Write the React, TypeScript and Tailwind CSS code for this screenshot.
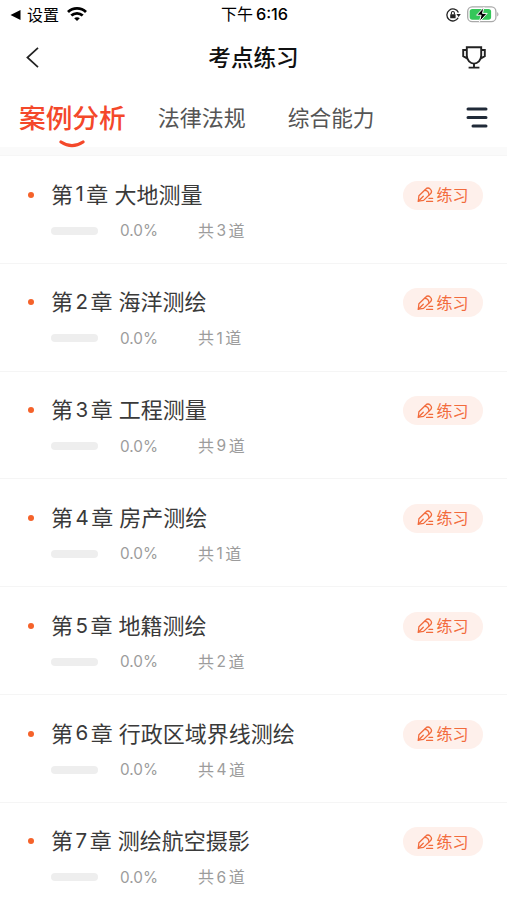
const chapters = [
  { no: 1, name: "大地测量", count: 3 },
  { no: 2, name: "海洋测绘", count: 1 },
  { no: 3, name: "工程测量", count: 9 },
  { no: 4, name: "房产测绘", count: 1 },
  { no: 5, name: "地籍测绘", count: 2 },
  { no: 6, name: "行政区域界线测绘", count: 4 },
  { no: 7, name: "测绘航空摄影", count: 6 },
];

const StatusBar = () => (
  <div className="grid h-[29px] grid-cols-3 items-center pl-[10px] pr-[8px] text-[16px] leading-none text-black">
    <div className="flex items-center">
      <svg width="11" height="10" viewBox="0 0 11 10">
        <path d="M10.5 0v10L0.5 5z" fill="#000" />
      </svg>
      <span className="ml-[6px]">设置</span>
      <svg className="-mt-px ml-[8px]" width="20" height="14" viewBox="0 0 20 14" fill="none" stroke="#000" strokeWidth="2.8">
        <path d="M1 5.1C6 .2 14 .2 19 5.1" />
        <path d="M4.3 8.6c3.3-3.1 8.1-3.1 11.4 0" />
        <path d="M7.2 11.2c1.6-1.4 4-1.4 5.6 0L10 14z" fill="#000" stroke="none" />
      </svg>
    </div>
    <div className="flex items-center justify-center gap-[3px]">
      <span>下午</span>
      <span className="text-[16.3px] font-medium">6:16</span>
    </div>
    <div className="flex items-center justify-end gap-[6px]">
      <svg width="15" height="14" viewBox="0 0 15 14" fill="none" stroke="#222" strokeWidth="1.3">
        <path d="M12.2 9.8A6 6 0 1 1 12.4 4.6" />
        <path d="M10.4 6h4.4l-2.2 3z" fill="#222" stroke="none" />
        <rect x="4.2" y="6.2" width="5.4" height="4" rx=".5" fill="#222" stroke="none" />
        <path d="M5.4 6.4V5a1.5 1.5 0 0 1 3 0v1.4" strokeWidth="1.1" />
      </svg>
      <svg width="32" height="17" viewBox="0 0 32 17">
        <rect x=".7" y=".9" width="28.2" height="14.8" rx="4.5" fill="#fff" stroke="#a9a9a9" strokeWidth="1.3" />
        <rect x="2.7" y="2.9" width="21.4" height="10.8" rx="2.6" fill="#34c759" />
        <path d="M30.2 6c1.7.7 1.7 3.8 0 4.6z" fill="#a9a9a9" />
        <path d="M17 1.2L9.6 9.2h4.5L12.4 15.8l7.8-8.4h-4.7z" fill="#000" stroke="#fff" strokeWidth="1" />
      </svg>
    </div>
  </div>
);

const Header = () => (
  <header className="flex h-[56px] items-center justify-between pl-[26px] pr-[21px]">
    <svg width="13" height="21" viewBox="0 0 13 21" fill="none" stroke="#222" strokeWidth="1.7">
      <path d="M12 .8L1.4 10.5 12 20.2" />
    </svg>
    <h1 className="ml-[6px] mt-[2px] text-[22.6px] font-medium leading-none text-[#111]">考点练习</h1>
    <svg width="24" height="23" viewBox="0 0 24 23" fill="none" stroke="#222" strokeWidth="1.9">
      <path d="M4.8 1.2h14.4v8.4c0 4.8-3.6 8-7.2 8s-7.2-3.2-7.2-8z" />
      <path d="M4.8 4H1.2v6.2l3.9 2.2M19.2 4h3.6v6.2l-3.9 2.2" />
      <path d="M12 17.6V21.6M6.6 21.6h10.8" />
    </svg>
  </header>
);

const Tabs = () => (
  <nav className="flex h-[62px] items-start px-[19px] pt-[18px] text-[22px] leading-[30px] text-[#555]">
    <div className="flex flex-col items-center">
      <span className="text-[26.7px] font-medium text-[#f4482a]">案例分析</span>
      <svg className="mt-[7px]" width="26" height="8" viewBox="0 0 26 8" fill="none">
        <path d="M2 2c7 4.6 15 4.6 22 0" stroke="#f4482a" strokeWidth="3.2" strokeLinecap="round" />
      </svg>
    </div>
    <span className="ml-[32px]">法律法规</span>
    <span className="ml-[42px] text-[21.7px]">综合能力</span>
    <svg className="ml-auto mt-[4px]" width="22" height="22" viewBox="0 0 22 22" stroke="#202a38" strokeWidth="3" strokeLinecap="round">
      <path d="M2 2h18M2 10.5h18M7 19h13" />
    </svg>
  </nav>
);

const PracticeButton = () => (
  <button className="flex h-[29px] w-[80px] items-center justify-center gap-[2px] rounded-full bg-[#fef0eb] text-[16px] leading-none text-[#f26b3c]">
    <svg width="17" height="16" viewBox="0 0 17 16" fill="none" stroke="#f26b3c" strokeWidth="1.3" strokeLinejoin="round" strokeLinecap="round">
      <path d="M1.3 14.2l.6-5.4L8.6 2.2a3.3 3.3 0 0 1 4.8 4.6l-6.8 6.6z" />
      <path d="M1.3 14.2l5-5M7.6 3.4c2.6 0 4.2 1.8 4.4 4.4M12 11.4h3.6M9.6 14.4h6" />
    </svg>
    练习
  </button>
);

const ChapterRow = ({ no, name, count }: { no: number; name: string; count: number }) => (
  <li className="flex h-[107.8px] items-start justify-between border-b border-[#f5f5f5] pl-[28px] pr-[24px] pt-[22.6px]">
    <div className="flex">
      <span className="mt-[13px] h-[6px] w-[6px] rounded-full bg-[#f5622a]" />
      <div className="ml-[17px]">
        <div className="flex h-8 items-center text-[22px] leading-none text-[#3a3a3a]">
          <span>第</span>
          <span className="mx-[2.5px] text-[20.5px]">{no}</span>
          <span>章</span>
          <span className="ml-[6px]">{name}</span>
        </div>
        <div className="mt-[10px] flex h-5 items-center text-[16px] leading-none text-[#9c9c9c]">
          <span className="h-[8px] w-[47px] rounded-full bg-[#eee]" />
          <span className="ml-[22px] w-[78px] text-[15.3px]">0.0%</span>
          <span>共</span>
          <span className="mx-[2.5px] text-[15.5px]">{count}</span>
          <span>道</span>
        </div>
      </div>
    </div>
    <div className="mt-[2px]">
      <PracticeButton />
    </div>
  </li>
);

export default function App() {
  return (
    <div className="h-[900px] w-[507px] overflow-hidden bg-white font-['Inter','Noto_Sans_CJK_SC',sans-serif]">
      <StatusBar />
      <Header />
      <Tabs />
      <div className="h-[9px] border-b border-[#f6f6f6] bg-[#fafafa]" />
      <ul>
        {chapters.map((chapter) => (
          <ChapterRow key={chapter.no} {...chapter} />
        ))}
      </ul>
    </div>
  );
}
